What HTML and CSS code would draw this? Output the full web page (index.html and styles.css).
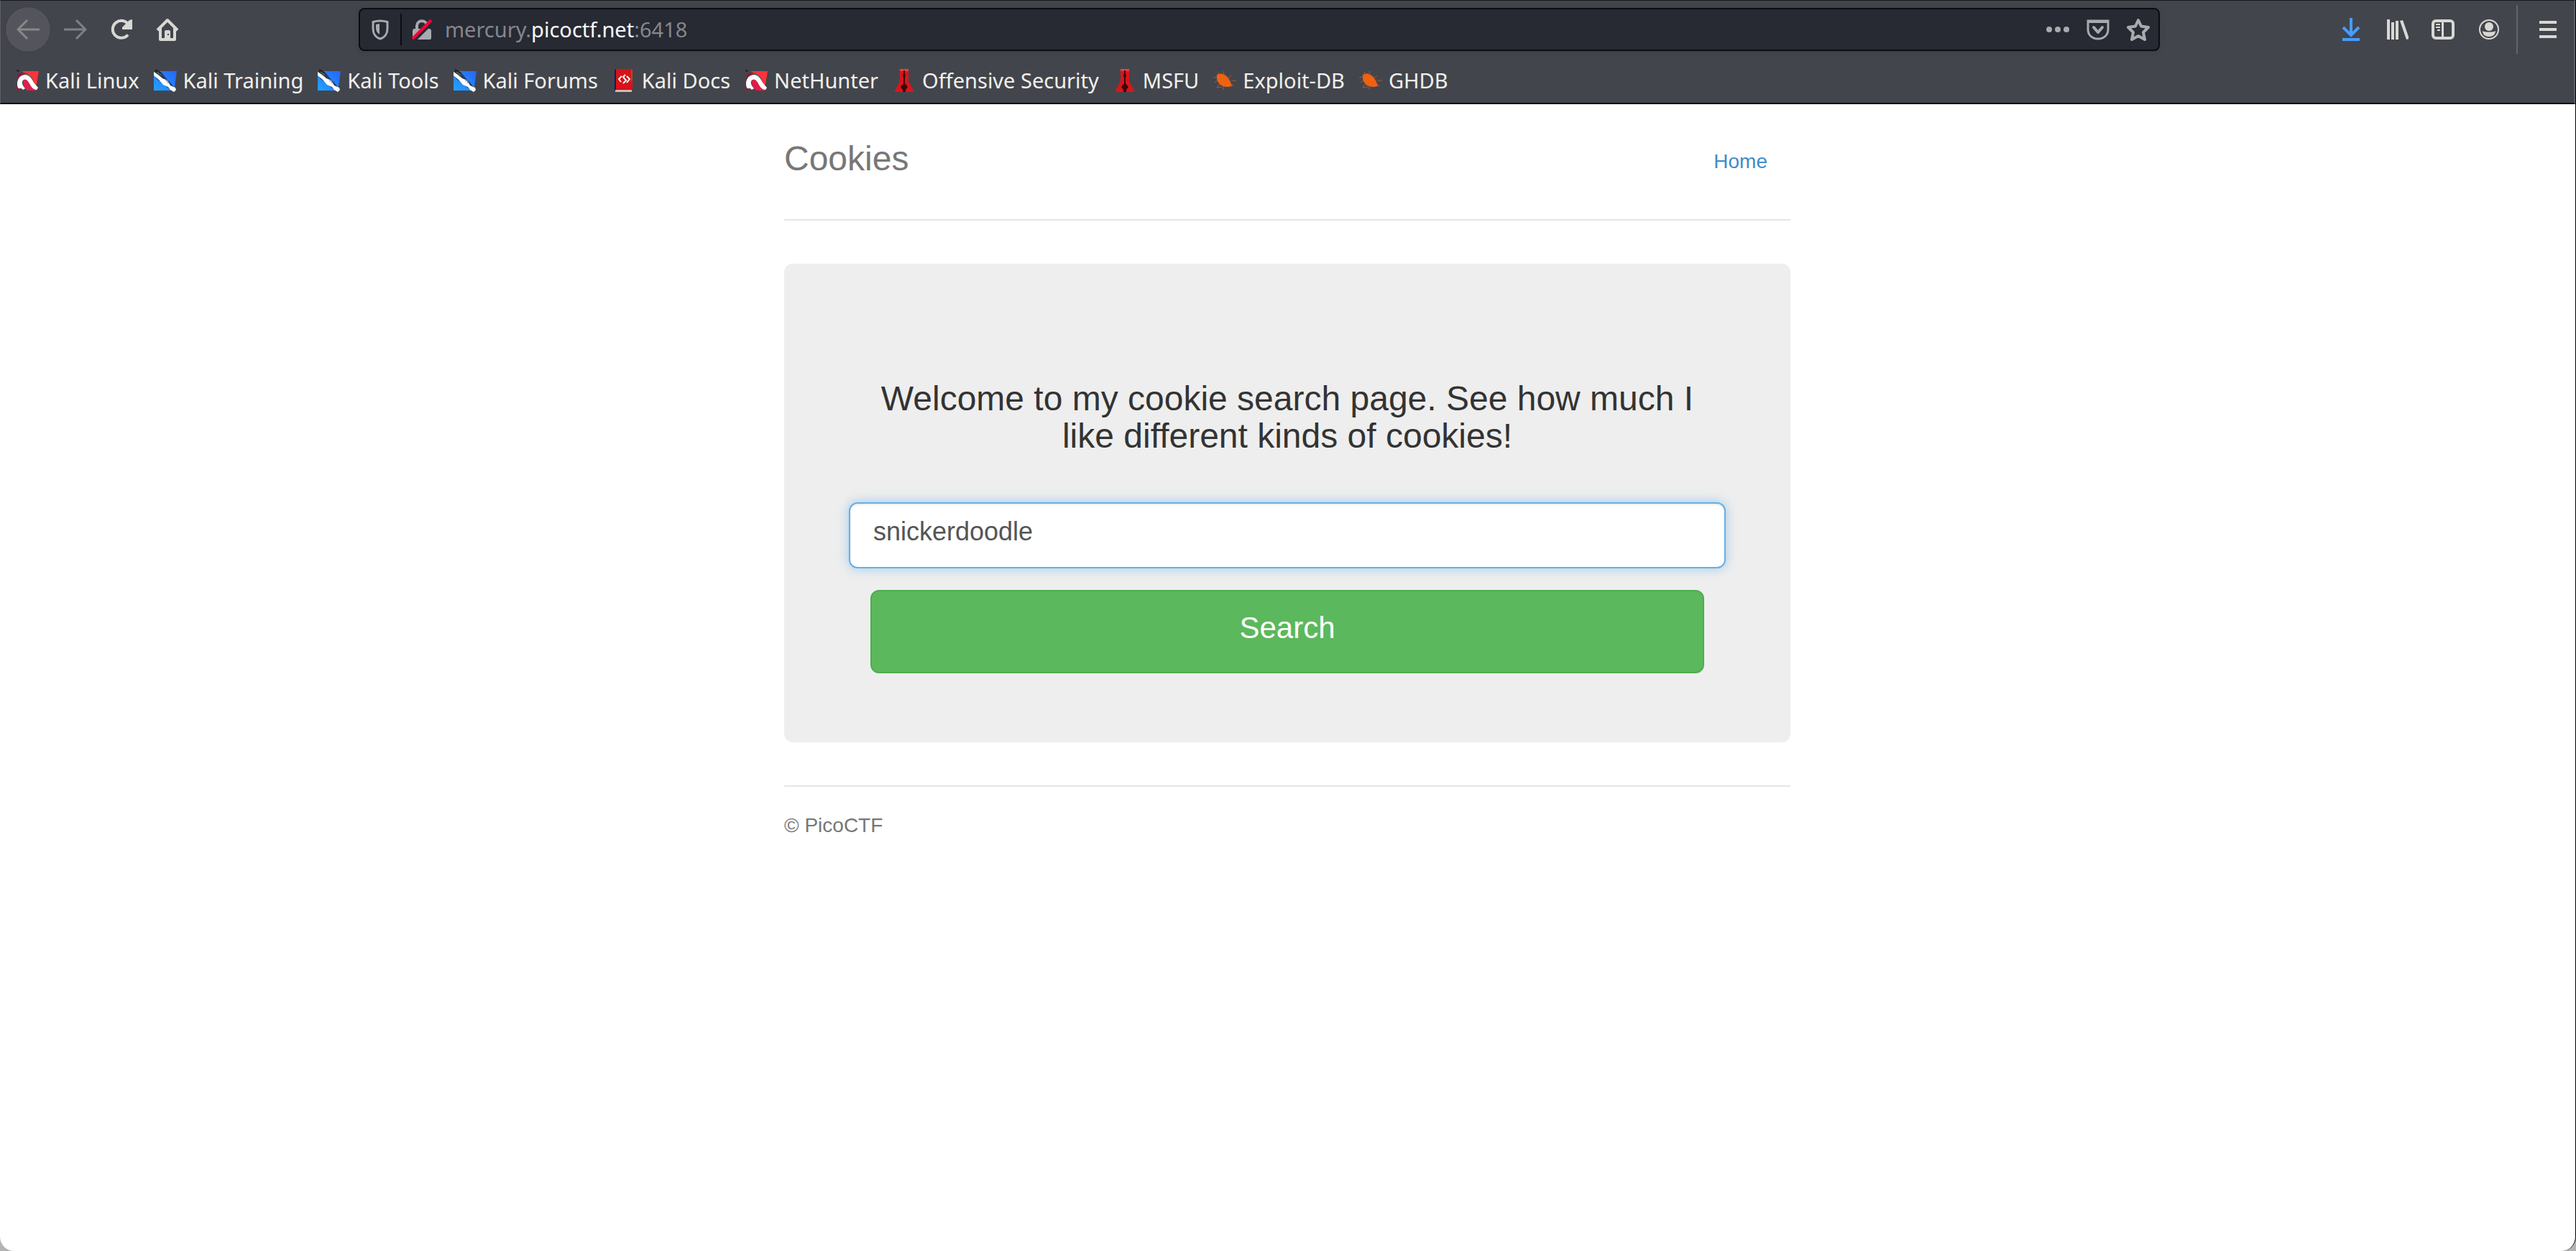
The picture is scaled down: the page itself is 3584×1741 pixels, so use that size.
FILE: index.html
```html
<!DOCTYPE html>
<html lang="en">
<head>
<meta charset="utf-8">
<title>Cookies</title>
<link rel="stylesheet" href="styles.css">
</head>
<body>
<svg class="defs" aria-hidden="true">
  <symbol id="kali-blade" viewBox="0 0 32 32">
    <linearGradient id="blue" x1="0" y1="1" x2="1" y2="0"><stop offset="0" stop-color="#22a4ff"/><stop offset="1" stop-color="#2663ff"/></linearGradient>
    <path fill="url(#blue)" d="M5 3h27l-3 21-3 6H0V8z"/>
    <path fill="#2b3d58" d="M5 2l6 3 7 9 6 6 6 8-2 4-7-5L4 14 0 6z"/>
    <path fill="#fff" d="M0 4l6 4 6 5 7 3 4 7 7 3 1 3-3 3-5-3-3-4-7-3-6-7-7-6z"/>
    <path fill="#222" d="M3 0l7 5-1 3-8-5z"/>
    <path stroke="#888" stroke-width="1" fill="none" d="M4 4l6 4m6 8l3 1 1 3"/>
  </symbol>
  <symbol id="kali-dragon" viewBox="0 0 32 32">
    <path fill="#ff3438" d="M8 3h24l-3 18-3 3L15 7z"/>
    <path fill="#8d1738" d="M3 8l8-3 6 2-2 3-8 1-4 8-1-3z"/>
    <path fill="#5a6066" d="M9 5l8 2 6 5 2 6-8-8z"/>
    <path fill="#db1f49" d="M10 18c0-5 6-5 9-1l10 13H16c-4-2-6-7-6-12z"/>
    <path fill="#fff" d="M3 27C0 17 4 9 12 8c7 0 10 5 13 11l6 7-2 3c-4 0-7-3-9-7-3-6-6-9-9-7-4 2-2 8 2 12l-3 2-2-2z"/>
    <path fill="#9e1739" d="M0 23l4 4 2 3H2z"/><path fill="#222" d="M1 1l4 1-1 2-3-1z"/>
  </symbol>
  <symbol id="spike" viewBox="0 0 26 32">
    <path fill="#d8151b" d="M7 0h12v17l7 13v2H0v-2l7-13z"/><path fill="#ff3b3b" d="M7 0h12v3H7z"/>
    <path fill="#3a060a" d="M12 2h2v4l1 3-1 3v8l4 5-3 4v3h-4v-3l-3-4 4-5v-8l-1-3 1-3z"/>
  </symbol>
  <symbol id="bug" viewBox="0 0 32 32">
    <path fill="#ef6210" d="M5 8c5-3 12-1 16 5l3 5 2 6-6 1c-8 0-13-4-15-11z"/>
    <path fill="none" stroke="#a05a38" stroke-width="1" d="M9 8L7 4m8 5l-1-6m7 10l4-4m0 7h7m-8 4l5 4M5 11l-5 1m6 4l-4 3m7 1l-4 6 7-1m2-1v5"/>
  </symbol>
</svg>

<header class="browser">
  <nav class="toolbar" aria-label="Browser">
    <div class="nav-buttons">
      <button class="tool back" aria-label="Back"><svg viewBox="0 0 32 32"><path class="line3" d="M32 16H3M15 3L2 16l13 13"/></svg></button>
      <button class="tool faded" aria-label="Forward"><svg viewBox="0 0 32 32"><path class="line3" d="M0 16h29M17 3l13 13-13 13"/></svg></button>
      <button class="tool" aria-label="Reload"><svg viewBox="0 0 32 32"><path class="line4" d="M25 23.500A12 12 0 1 1 26 9.500"/><path class="solid" d="M31 2v14H17v-3l10-10z"/></svg></button>
      <button class="tool" aria-label="Home"><svg viewBox="0 0 32 32"><path class="line4" stroke-linejoin="round" d="M2 17L16 3l14 14M6 14v16h20V14"/><path class="solid" fill-rule="evenodd" d="M12 31V19q0-2 2-2h4q2 0 2 2v12zM16 22v2h2v-2z"/></svg></button>
    </div>
    <div class="address">
      <button class="mini" aria-label="Tracking protection"><svg viewBox="0 0 32 32"><path class="line3" d="M6 5.500q10-3 20 0V15c0 6-3 12-10 14C9 27 6 21 6 15z"/><path class="solid" d="M15 8v15c-3-2-5-5-5-9V9z"/></svg></button>
      <span class="address-rule"></span>
      <button class="mini" aria-label="Connection not secure"><svg viewBox="0 0 32 32"><path class="solid" d="M6 15h20q3 0 3 3v10q0 2-2 2H5q-2 0-2-2V18q0-3 3-3z"/><path class="line4" d="M9 16v-5c0-9 14-9 14 0v5"/><path stroke="#272933" stroke-width="4" d="M5 32L32 5"/><path stroke="#ff0039" stroke-width="4" d="M3 29L29 3"/></svg></button>
      <div class="url" role="textbox" aria-label="Address">mercury.<span class="domain">picoctf.net</span>:6418</div>
      <div class="page-actions">
        <button class="mini" aria-label="Page actions"><svg viewBox="0 0 32 32"><circle class="solid" cx="4" cy="16" r="4"/><circle class="solid" cx="16" cy="16" r="4"/><circle class="solid" cx="28" cy="16" r="4"/></svg></button>
        <button class="mini" aria-label="Save to Pocket"><svg viewBox="0 0 32 32"><path class="line3" d="M2 4h28v12c0 8-6 13-14 13S2 24 2 16z"/><path class="solid" d="M2 3h28v4H2z"/><path class="line4" stroke-linecap="round" stroke-linejoin="round" d="M10 13l6 7 6-7"/></svg></button>
        <button class="mini" aria-label="Bookmark"><svg viewBox="0 0 32 32"><path class="line4" stroke-linejoin="round" d="M16 3l4 8.500L30 13l-7 7 2 10-9-5-9 5 2-10-7-7 10-1.500z"/></svg></button>
      </div>
    </div>
    <div class="tools">
      <button class="tool download" aria-label="Downloads"><svg viewBox="0 0 32 32"><path class="line4" d="M16 0v24M5 13l11 11 11-11"/><path class="solid" d="M4 28h24v4H4z"/></svg></button>
      <button class="tool" aria-label="Library"><svg viewBox="0 0 32 32"><path class="solid" d="M2 2h4v28H2zM8 6h4v24H8zM14 4h4v26h-4zM20 4l4-1 9 26-4 1z"/></svg></button>
      <button class="tool" aria-label="Sidebar"><svg viewBox="0 0 32 32"><rect class="line4" x="2" y="4" width="28" height="24" rx="4"/><path class="solid" d="M14 4h3v24h-3zM6 8h6v2H6zM6 12h6v2H6zM8 16h4v2H8z"/></svg></button>
      <button class="tool" aria-label="Account"><svg viewBox="0 0 32 32"><circle fill="none" stroke="currentColor" stroke-width="2" cx="16" cy="16" r="13"/><circle class="solid" cx="16" cy="12" r="6"/><path class="solid" d="M7 18c3 2 15 2 18 0 0 5-4 8-9 8s-9-3-9-8z"/></svg></button>
      <span class="tool-rule"></span>
      <button class="tool" aria-label="Menu"><svg viewBox="0 0 32 32"><path class="solid" d="M4 4h24v4H4zM4 14h24v4H4zM4 24h24v4H4z"/></svg></button>
    </div>
  </nav>
  <nav class="bookmarks" aria-label="Bookmarks">
    <a href="#"><svg><use href="#kali-dragon"/></svg>Kali Linux</a>
    <a href="#"><svg><use href="#kali-blade"/></svg>Kali Training</a>
    <a href="#"><svg><use href="#kali-blade"/></svg>Kali Tools</a>
    <a href="#"><svg><use href="#kali-blade"/></svg>Kali Forums</a>
    <a href="#"><svg class="slim" viewBox="0 0 26 32"><path fill="#0b1f5c" d="M0 1l3-1v29l-3 2z"/><path fill="#d81218" d="M2 0h22l1 3v25H2z"/><path fill="#a85020" d="M23 1h2v16h-2z"/><path fill="#d8b6b6" d="M1 29h23v3H1z"/><path fill="none" stroke="#fff" stroke-width="2" d="M10 10l-4 4 3 4M17 10l4 4-4 5M15 8l-3 3 4 5-4 4"/></svg>Kali Docs</a>
    <a href="#"><svg><use href="#kali-dragon"/></svg>NetHunter</a>
    <a href="#"><svg class="slim"><use href="#spike"/></svg>Offensive Security</a>
    <a href="#"><svg class="slim"><use href="#spike"/></svg>MSFU</a>
    <a href="#"><svg><use href="#bug"/></svg>Exploit-DB</a>
    <a href="#"><svg><use href="#bug"/></svg>GHDB</a>
  </nav>
</header>

<div class="viewport">
  <div class="container">
    <header class="site-header">
      <h3 class="brand">Cookies</h3>
      <nav class="site-nav"><a href="#">Home</a></nav>
    </header>
    <main class="jumbotron">
      <h3 class="welcome">Welcome to my cookie search page. See how much I like different kinds of cookies!</h3>
      <form class="search-form">
        <input class="search-input" type="text" aria-label="Cookie name" value="snickerdoodle">
        <button class="search-button" type="button">Search</button>
      </form>
    </main>
    <footer class="site-footer">© PicoCTF</footer>
  </div>
</div>
</body>
</html>
```
FILE: styles.css
```css
* {
  box-sizing: border-box;
}

html {
  background: #b4b4b4;
}

body {
  margin: 0;
  min-height: 100vh;
  display: flex;
  flex-direction: column;
  font-family: "Liberation Sans", Arial, sans-serif;
  font-size: 28px;
  line-height: 40px;
  color: #333;
  background: #fff;
  border-right: 1px solid #000;
  border-radius: 0 0 20px 20px;
}

button {
  font: inherit;
  cursor: pointer;
}

a {
  text-decoration: none;
}

.defs {
  position: absolute;
  width: 0;
  height: 0;
}

.solid {
  fill: currentColor;
}

.line3,
.line4 {
  fill: none;
  stroke: currentColor;
  stroke-width: 3;
}

.line4 {
  stroke-width: 4;
}

/* Browser chrome */

.browser {
  font-family: "Noto Sans", sans-serif;
  font-size: 29px;
  color: #d8d8d4;
  background: #43454c;
  border-top: 1px solid #17171c;
  border-bottom: 2px solid #0c0c12;
  border-left: 1px solid #5c5e64;
  border-right: 2px solid #5c5e64;
}

.toolbar {
  display: flex;
  align-items: center;
  height: 80px;
  padding: 0 4px 0 6px;
}

.nav-buttons,
.tools,
.page-actions {
  display: flex;
  align-items: center;
}

.nav-buttons {
  flex: 0 0 auto;
  width: 492px;
}

.tool,
.mini {
  display: flex;
  align-items: center;
  justify-content: center;
  width: 64px;
  height: 64px;
  padding: 0;
  border: 0;
  background: none;
  color: inherit;
}

.mini {
  width: 56px;
  height: 56px;
}

.tool svg,
.mini svg {
  width: 32px;
  height: 32px;
}

.back {
  margin-right: 2px;
  border: 1px solid #3c3e44;
  border-radius: 50%;
  background: #54555c;
  color: #88888a;
}

.faded {
  color: #808184;
}

.address {
  flex: 1 1 auto;
  display: flex;
  align-items: center;
  height: 60px;
  border: 2px solid #0c0c10;
  border-radius: 8px;
  background: #272933;
  color: #a9aaad;
  box-shadow: 0 2px 8px rgba(0, 0, 0, 0.1);
}

.address-rule {
  width: 2px;
  height: 44px;
  background: #0c0c10;
}

.url {
  flex: 1 1 auto;
  padding-left: 4px;
  color: #85878b;
}

.domain {
  color: #f9f9fa;
}

.tools {
  flex: 0 0 auto;
  width: 572px;
  justify-content: flex-end;
}

.download {
  color: #459dff;
}

.tool-rule {
  width: 2px;
  height: 68px;
  margin: 0 10px 0 6px;
  background: #65666b;
}

.bookmarks {
  display: flex;
  align-items: center;
  gap: 20px;
  height: 62px;
  padding: 0 21px;
}

.bookmarks a {
  display: flex;
  align-items: center;
  gap: 9px;
  color: #f0f0ec;
  white-space: nowrap;
}

.bookmarks svg {
  width: 32px;
  height: 32px;
}

.bookmarks .slim {
  width: 26px;
  margin: 0 3px;
}

/* Page */

.viewport {
  flex: 1;
  padding: 40px 1px 40px 0;
}

.container {
  width: 100%;
  max-width: 1400px;
  margin: 0 auto;
}

.site-header {
  display: flex;
  align-items: center;
  justify-content: space-between;
  height: 122px;
  margin-bottom: 60px;
  padding-bottom: 48px;
  border-bottom: 2px solid #e5e5e5;
}

.brand {
  margin: 0;
  font-size: 48px;
  font-weight: 400;
  color: #777;
}

.site-nav {
  padding: 8px 32px 0;
}

.site-nav a {
  color: #428bca;
}

.jumbotron {
  margin-bottom: 60px;
  padding: 162px 90px 96px;
  text-align: center;
  border-radius: 12px;
  background: #eee;
}

.welcome {
  margin: 0 30px 66px;
  font-size: 48px;
  font-weight: 400;
  line-height: 52px;
}

.search-form {
  display: flex;
  flex-direction: column;
  gap: 30px;
}

.search-input {
  height: 92px;
  padding: 10px 32px 20px;
  font: inherit;
  font-size: 36px;
  color: #555;
  border: 2px solid #66afe9;
  border-radius: 12px;
  outline: 0;
  background: #fff;
  box-shadow: inset 0 2px 2px rgba(0, 0, 0, 0.08), 0 0 16px rgba(102, 175, 233, 0.6);
}

.search-button {
  height: 116px;
  margin: 0 30px;
  padding: 0 32px 10px;
  font-size: 42px;
  color: #fff;
  border: 2px solid #4cae4c;
  border-radius: 12px;
  background: #5cb85c;
}

.site-footer {
  padding-top: 34px;
  color: #777;
  border-top: 2px solid #e5e5e5;
}
```
